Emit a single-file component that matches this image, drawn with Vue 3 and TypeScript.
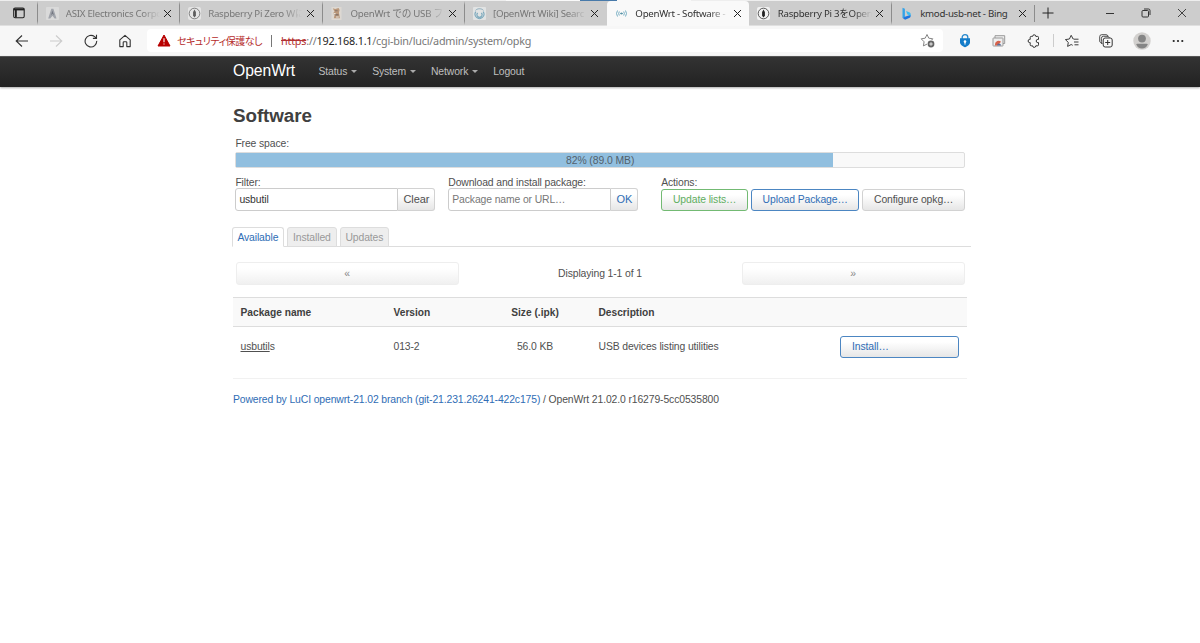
<script setup lang="ts">
interface BrowserTab {
  title: string
  icon: string
  state: 'idle' | 'sleeping' | 'active'
  faded: boolean
}

const browserTabs: BrowserTab[] = [
  { title: 'ASIX Electronics Corpo', icon: 'asix', state: 'sleeping', faded: true },
  { title: 'Raspberry Pi Zero WにO', icon: 'ring', state: 'sleeping', faded: true },
  { title: 'OpenWrt での USB フラ', icon: 'bear', state: 'sleeping', faded: true },
  { title: '[OpenWrt Wiki] Searc', icon: 'wiki', state: 'sleeping', faded: true },
  { title: 'OpenWrt - Software -', icon: 'wave', state: 'active', faded: true },
  { title: 'Raspberry Pi 3をOpenW', icon: 'ring', state: 'idle', faded: true },
  { title: 'kmod-usb-net - Bing', icon: 'bing', state: 'idle', faded: false },
]

const menus: string[] = ['Status', 'System', 'Network']
const used = 82
</script>

<template>
  <div class="screen">
    <header class="strip">
      <div class="workspace">
        <svg width="12" height="12" viewBox="0 0 12 12"><rect x=".7" y="1" width="10.5" height="9.7" rx="1.4" fill="none" stroke="#222" stroke-width="1.1"/><path d="M.7 2.4h10.5" stroke="#222" stroke-width="2"/><path d="M2.9 3v7.5" stroke="#222" stroke-width="1.8"/></svg>
      </div>
      <div v-for="tab in browserTabs" :key="tab.title" class="tab" :class="tab.state">
        <span class="favicon">
          <svg v-if="tab.icon === 'asix'" width="13" height="13" viewBox="0 0 13 13"><rect width="13" height="13" rx="1" fill="#e2e2e2"/><path d="M2.2 11.4 5.3 1.8h2.1l3.1 9.6H8.6L6.5 8.7l-2.3 2.7z" fill="#8a8f9a"/><path d="m6.3 3.5-1.2 4.7 1.4-1.4 1.5 1.5z" fill="#404656"/></svg>
          <svg v-else-if="tab.icon === 'ring'" width="13" height="13" viewBox="0 0 13 13"><rect width="13" height="13" rx="2" fill="#f1f1f1"/><circle cx="6.5" cy="6.5" r="5.3" fill="none" stroke="#333" stroke-width=".8"/><path d="M6.5 2.4 5.1 5v3.8l1.4 1.6 1.4-1.6V5z" fill="#222"/></svg>
          <svg v-else-if="tab.icon === 'bear'" width="13" height="13" viewBox="0 0 13 13"><rect x="1.5" width="10" height="13" fill="#e6dfd5"/><path d="m2.8 1.3 2.4.8 3.4-1 1 2-.7 2.4 1 5.8H3.8l.7-3-1.6-2 1.6-1.5z" fill="#b07d50"/><path d="M5 3.2h2.6v1.1H5zM5.2 7h3.3v1.6H5.2z" fill="#644837"/><path d="M3.4 6.1h2.2v1.2H3.4zM6 9.5h2.8v1H6z" fill="#f5eee2"/></svg>
          <svg v-else-if="tab.icon === 'wiki'" width="13" height="13" viewBox="0 0 13 13"><rect width="13" height="13" rx="1" fill="#eceff0"/><path d="M2.9 4.6a4.4 4.4 0 1 0 7.2 0M4.7 6a2.5 2.5 0 1 0 3.6 0" fill="none" stroke="#4f95b3" stroke-width="1.1"/><path d="M2.5 3.4c2-2.2 6-2.2 8 0" fill="none" stroke="#5b91aa" stroke-width=".9"/></svg>
          <svg v-else-if="tab.icon === 'wave'" width="13" height="13" viewBox="0 0 13 13"><path d="M2.5 3.5q-2 3 0 6M4.3 4.5q-1.3 2 0 4M10.5 3.5q2 3 0 6M8.7 4.5q1.3 2 0 4M5 6.5h3" fill="none" stroke="#68a5bc" stroke-width=".9"/><circle cx="6.5" cy="6.5" r="1" fill="#5b94a6"/></svg>
          <svg v-else width="13" height="13" viewBox="0 0 13 13"><path d="m2.5.8 2.4.9v8.6l-2.4.8z" fill="#35a3e8"/><path d="m2.7 10.9 2.2-1.2 5.8-2v1.2q0 1.2-1 1.8L5.1 12.8z" fill="#1f75df"/><path d="m6.1 4.1 3.2 1.2q1.4.6 1.4 2v1.4L7.4 7.5z" fill="#3bbcf0"/></svg>
        </span>
        <span class="title" :class="{ faded: tab.faded }">{{ tab.title }}</span>
        <svg class="close" width="9" height="9" viewBox="0 0 9 9"><path d="m1 1 7 7M8 1 1 8" stroke="#222" stroke-width="1"/></svg>
      </div>
      <div class="new-tab"><svg width="12" height="12" viewBox="0 0 12 12"><path d="M6 .5v11M.5 6h11" stroke="#222" stroke-width="1"/></svg></div>
      <div class="window-controls">
        <svg width="10" height="10" viewBox="0 0 10 10"><path d="M1 5.5h8" stroke="#333"/></svg>
        <svg width="10" height="10" viewBox="0 0 10 10"><rect x="1" y="2.5" width="6.5" height="6.5" rx="1" fill="none" stroke="#333"/><path d="M3 1h4.5Q9 1 9 2.5V7" fill="none" stroke="#333"/></svg>
        <svg width="10" height="10" viewBox="0 0 10 10"><path d="m1 1 8 8M9 1 1 9" stroke="#333" stroke-width=".9"/></svg>
      </div>
      <i class="edge-light"></i><i class="edge-blue"></i>
    </header>

    <div class="toolbar">
      <div class="navigation">
        <svg viewBox="0 0 14 14"><path d="M13 7H1M7 1.5 1.2 7 7 12.5" fill="none" stroke="#333" stroke-width="1.1"/></svg>
        <svg viewBox="0 0 14 14"><path d="M1 7h12M7 1.5 12.8 7 7 12.5" fill="none" stroke="#ccc" stroke-width="1.1"/></svg>
        <svg viewBox="0 0 14 14"><path d="M12.7 6.9A5.8 5.8 0 1 1 10.6 2.7l1.8 1.5M12.5.8v3.6H8.9" fill="none" stroke="#333" stroke-width="1.1"/></svg>
        <svg viewBox="0 0 14 14"><path d="M1.8 5.8 7 1.3l5.2 4.5v6.8H8.8V8.5Q8.8 7.8 8 7.8H6q-.8 0-.8.7v4.1H1.8z" fill="none" stroke="#333" stroke-width="1.1" stroke-linejoin="round"/></svg>
      </div>
      <div class="address">
        <svg class="warning" width="14" height="13" viewBox="0 0 14 13"><path d="M7 1 13 12H1z" fill="#b80000" stroke="#b80000" stroke-linejoin="round"/><path d="M7 4.3v4M7 9.4v1.2" stroke="#fff" stroke-width="1.1"/></svg>
        <span class="insecure">セキュリティ保護なし</span>
        <i class="divider"></i>
        <span class="url"><s>https</s>://<b>192.168.1.1</b>/cgi-bin/luci/admin/system/opkg</span>
        <svg class="favorite" width="16" height="16" viewBox="0 0 16 16"><path d="M7 11.1l-3.6 1.8.7-4.1-2.9-3 4-.6L7 1.5l1.8 3.7 4 .6L11.6 7" fill="none" stroke="#777" stroke-width=".9" stroke-linejoin="round"/><circle cx="11" cy="11" r="3.4" fill="#666"/><path d="M11 9.2v3.6M9.2 11h3.6" stroke="#fff" stroke-width=".8"/></svg>
      </div>
      <div class="extensions">
        <svg width="12" height="14" viewBox="0 0 12 14"><path d="M3.2 5V3.3a2.8 2.6 0 0 1 5.6 0V5" fill="none" stroke="#2587cc" stroke-width="1.3"/><path d="M1 4.3h10v4c0 2.5-3 4.5-5 5-2-.5-5-2.5-5-5z" fill="#147cc9"/><circle cx="6" cy="7.6" r="1.3" fill="#fff"/><path d="M6 8v2.6" stroke="#fff"/></svg>
        <svg width="14" height="14" viewBox="0 0 14 14"><path d="M3 4V1.7h9.7v7.8h-2" fill="#eee" stroke="#999"/><rect x="1" y="4" width="10" height="8" rx=".5" fill="#eee" stroke="#999"/><path d="M3 11.5V10a3.5 3.5 0 0 1 6-2.2L7.5 9.5 5 11.5z" fill="#d7634c"/><path d="M5 11.5a2 2 0 0 1 4 0z" fill="#596d98"/></svg>
        <svg width="14" height="14" viewBox="0 0 14 14"><path d="M4.2 2.4h1.4a1.6 1.6 0 0 1 3.2 0h1.7q1 0 1 1v2h-.7a1.6 1.6 0 0 0 0 3.2h.7v2.2q0 1-1 1H8.8a1.6 1.6 0 0 1-3.2 0H4.2q-1 0-1-1V8.6H2.7a1.6 1.6 0 0 1 0-3.2h.5v-2q0-1 1-1Z" fill="none" stroke="#333" stroke-width="1"/></svg>
        <i></i>
        <svg width="14" height="14" viewBox="0 0 14 14"><path d="M8.8 5H8.1L6.2 1.3 4.4 5l-4 .6 2.9 2.8-.7 4L6.2 10.5l1.5.8M9 5.2h4.5M9 8h4.5M9.5 10.8h4" fill="none" stroke="#333" stroke-width=".95" stroke-linejoin="round"/></svg>
        <svg width="14" height="14" viewBox="0 0 14 14"><path d="m3 9.5-1.4-.8Q.7 8 .7 7V2.7q0-2 2-2H7q1.5 0 2.2 1.5M3.2 10Q2.4 9 2.4 7.5V4.3q0-2 2-2H8q1.8 0 2.4 1.5" fill="none" stroke="#333" stroke-width=".85"/><rect x="4.2" y="4" width="9" height="9" rx="2" fill="#f8f8f8" stroke="#333"/><path d="M8.7 6v5M6.2 8.5h5" stroke="#333"/></svg>
        <svg width="18" height="18" viewBox="0 0 18 18"><circle cx="9" cy="9" r="8.7" fill="#d2d0ce"/><circle cx="9" cy="6.6" r="3.9" fill="#858585"/><path d="M3.4 12.5q0-.8 1-.8h9.2q1 0 1 .8c-.7 2.7-3.1 4-5.6 4s-4.9-1.3-5.6-4z" fill="#858585"/></svg>
        <svg width="14" height="14" viewBox="0 0 14 14"><g fill="#222"><circle cx="2.7" cy="7" r="1.1"/><circle cx="7" cy="7" r="1.1"/><circle cx="11.3" cy="7" r="1.1"/></g></svg>
      </div>
    </div>

    <nav class="luci-nav">
      <strong>OpenWrt</strong>
      <a v-for="menu in menus" :key="menu">{{ menu }}<i></i></a>
      <a>Logout</a>
    </nav>

    <main>
      <h2>Software</h2>
      <section class="controls">
        <label class="space-label">Free space:</label>
        <div class="progress"><div :style="{ width: used + '%' }"></div><span>{{ used }}% (89.0 MB)</span></div>
        <div class="forms">
          <div class="field filter"><label>Filter:</label><div class="group"><input value="usbutil"><button>Clear</button></div></div>
          <div class="field download"><label>Download and install package:</label><div class="group"><input placeholder="Package name or URL…"><button class="blue">OK</button></div></div>
          <div class="field actions"><label>Actions:</label><div class="buttons"><button class="green">Update lists…</button><button class="outlined">Upload Package…</button><button>Configure opkg…</button></div></div>
        </div>
      </section>
      <div class="page-tabs"><a class="current">Available</a><a>Installed</a><a>Updates</a></div>
      <div class="pager"><button>«</button><span>Displaying 1-1 of 1</span><button>»</button></div>
      <div class="table">
        <div class="row head"><span>Package name</span><span>Version</span><span class="size">Size (.ipk)</span><span>Description</span><span></span></div>
        <div class="row"><span><u>usbutil</u>s</span><span>013-2</span><span class="size">56.0 KB</span><span>USB devices listing utilities</span><button class="outlined install">Install…</button></div>
      </div>
      <footer><a>Powered by LuCI openwrt-21.02 branch (git-21.231.26241-422c175)</a> / OpenWrt 21.02.0 r16279-5cc0535800</footer>
    </main>
  </div>
</template>

<style>
html, body { margin: 0; background: #fff; overflow: hidden; }
</style>

<style scoped>
* { box-sizing: border-box; }
.screen { width: 1200px; height: 643px; overflow: hidden; background: #fff; color: #505050; font: 10.4px/14px "Liberation Sans", Arial, sans-serif; letter-spacing: -.12px; }
svg { display: block; flex: none; }
.strip { position: relative; height: 26px; display: flex; background: #cdcdcd; border-top: 1px solid #eee; border-bottom: 1px solid #e0e0e0; font-family: "Noto Sans", "Noto Sans CJK JP", sans-serif; }
.workspace { width: 37px; padding: 6px 0 0 13px; }
.tab { position: relative; width: 142.4px; padding: 0 0 0 7.5px; display: flex; align-items: center; color: #333; border-left: 1px solid #8c8c8c; border-top: 4px solid #cdcdcd; border-bottom: 4px solid #cdcdcd; }
.tab.sleeping { color: #777; }
.tab.sleeping .favicon { opacity: .65; }
.tab.active { padding-left: 8.5px; border: 0; background: #f9f9f9; border-radius: 4px 4px 0 0; height: 25px; }
.tab.active + .tab { border-left-color: #cdcdcd; }
.title { width: 94px; margin-left: 7.3px; white-space: nowrap; line-height: 15px; font-size: 9.7px; letter-spacing: -.28px; }
.title.faded { mask-image: linear-gradient(90deg, #000 80%, transparent 100%); }
.close { margin-left: 3.5px; }
.new-tab { padding: 2px 0 0 7px; border-left: 1px solid #8c8c8c; height: 17px; margin-top: 4px; }
.window-controls { display: flex; gap: 26px; margin-left: auto; padding: 7px 13px 0 0; }
.edge-light { position: absolute; top: -1px; left: 506px; width: 185px; height: 1px; background: #f9f9f9; }
.edge-blue { position: absolute; top: -1px; left: 580px; width: 37px; height: 1px; background: #487aaa; }
.toolbar { height: 30px; display: flex; align-items: center; background: #f7f7f7; padding-bottom: 1px; }
.navigation { width: 147px; padding-left: 14.5px; display: flex; gap: 20.5px; }
.navigation svg { width: 14px; height: 14px; }
.address { width: 796px; height: 23px; border-radius: 4px; background: #fff; display: flex; align-items: center; padding: 0 7px 0 10px; font: 10.8px/18px "Noto Sans", "Noto Sans CJK JP", sans-serif; color: #777; }
.insecure { margin-left: 6px; color: #b52b2b; font: 10px/18px "Noto Sans CJK JP", sans-serif; font-feature-settings: "palt"; letter-spacing: -.5px; width: 86px; white-space: nowrap; }
.divider { width: 1px; height: 12px; margin-left: 8px; background: #777; }
.url { margin-left: 9px; white-space: nowrap; letter-spacing: -.21px; }
.url s { color: #b43333; }
.url b { color: #222; font-weight: 400; }
.favorite { margin-left: auto; }
.extensions { flex: 1; display: flex; align-items: center; padding-left: 16px; }
.extensions svg:nth-of-type(2) { margin-left: 21px; }
.extensions svg:nth-of-type(3) { margin-left: 21px; }
.extensions i { width: 1px; height: 13px; margin-left: 12px; background: #ccc; }
.extensions svg:nth-of-type(4) { margin-left: 11px; }
.extensions svg:nth-of-type(5) { margin-left: 20px; }
.extensions svg:nth-of-type(6) { margin-left: 20px; }
.extensions svg:nth-of-type(7) { margin-left: 20px; }
.luci-nav { height: 31px; padding-left: 233px; display: flex; align-items: center; background: linear-gradient(#333, #222); border-top: 1px solid #555; box-shadow: 0 1px 2px #0005; color: #bfbfbf; }
.luci-nav strong { width: 85.5px; color: #fff; font-size: 15.7px; font-weight: 400; letter-spacing: -.05px; padding-bottom: 2px; }
.luci-nav a { margin-right: 15.3px; }
.luci-nav a i { display: inline-block; border-left: 3px solid transparent; border-right: 3px solid transparent; border-top: 3px solid #aaa; margin: 0 0 2px 3.6px; }
main { width: 734px; margin-left: 233px; padding-top: 17px; }
h2 { margin: 0; color: #404040; font-size: 18.8px; line-height: 23px; letter-spacing: -.05px; }
.controls { margin-left: 2.4px; }
label { display: block; line-height: 14px; }
.space-label { margin-top: 10px; }
.progress { position: relative; height: 16px; width: 729.5px; margin-top: 1px; border: 1px solid #ddd; border-radius: 2px; background: #f9f9f9; }
.progress > div { height: 14px; background: #91bfdf; }
.progress span { position: absolute; inset: 0; text-align: center; line-height: 15px; font-size: 10.4px; letter-spacing: -.08px; color: #52616c; }
.forms { display: flex; margin-top: 8px; }
.field { width: 212.9px; }
.field.actions { width: 304px; }
.group { display: flex; height: 23px; margin-top: -2px; }
.buttons { display: flex; gap: 3px; margin-top: -1px; }
input { width: 163px; height: 23px; padding: 0 3px; border: 1px solid #ccc; border-radius: 3px 0 0 3px; font: 10.4px "Liberation Sans", Arial, sans-serif; color: #333; outline: none; letter-spacing: -.12px; }
input::placeholder { color: #777; opacity: 1; }
button { border: 1px solid #d2d2d2; border-radius: 3px; padding: 0; background: linear-gradient(#fff 25%, #e6e6e6); font: 10.4px/17px "Liberation Sans", Arial, sans-serif; color: #505050; letter-spacing: -.1px; }
.group button { width: 37px; border-left: 0; border-radius: 0 3px 3px 0; font-size: 11px; }
.download button { width: 27px; }
.blue, .outlined, .group .blue { color: #2f6db5; }
.buttons button { height: 22px; width: 103px; padding-bottom: 1px; }
.buttons .green { width: 87px; color: #5fae5f; border-color: #73ba73; }
.buttons .outlined { width: 108px; }
.outlined { border-color: #4c86c2; }
.page-tabs { width: 739px; height: 20px; margin: 16px 0 0 -1.5px; display: flex; gap: 3px; border-bottom: 1px solid #ddd; }
.page-tabs a { height: 20px; padding: 2px 4.9px; border: 1px solid #ddd; border-radius: 3px 3px 0 0; background: #eee; color: #999; font-size: 10.4px; line-height: 15px; }
.page-tabs .current { background: #fff; color: #2f6db5; border-bottom-color: #fff; }
.pager { display: flex; align-items: center; margin: 15px 2.5px 12px; }
.pager button { width: 223px; height: 23px; color: #888; border-color: #eee; background: linear-gradient(#fff 25%, #f0f0f0); }
.pager span { flex: 1; text-align: center; padding-top: 1px; }
.row { display: grid; grid-template-columns: 153px 97px 108px 241.5px 119px; align-items: center; height: 39px; padding-left: 7.5px; }
.head { height: 30px; padding-top: 2px; background: #f9f9f9; border-top: 1px solid #ddd; border-bottom: 1px solid #ddd; color: #404040; font-weight: bold; font-size: 10.2px; letter-spacing: 0; }
.row .size { text-align: center; transform: translateX(-9.5px); }
.row .install { height: 22px; text-align: left; padding: 0 0 1px 11px; }
.table { height: 82px; border-bottom: 1px solid #f1f1f1; }
footer { margin-top: 14px; white-space: nowrap; }
footer a { color: #2f6db5; }
</style>
